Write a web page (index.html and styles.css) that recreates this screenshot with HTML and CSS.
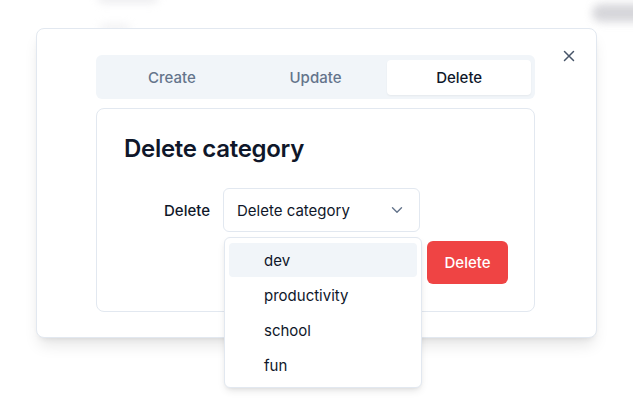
FILE: index.html
```html
<!DOCTYPE html>
<html>
<head>
<meta charset="utf-8">
<link rel="stylesheet" href="styles.css">
</head>
<body>
<div class="backdrop">
  <div class="ghost ghost-text"></div>
  <div class="ghost ghost-small"></div>
  <div class="ghost ghost-pill"></div>
</div>
<div class="modal">
  <button class="close" aria-label="Close">
    <svg width="12" height="12" viewBox="0 0 12 12"><path d="M1.5 1.5L10.5 10.5M10.5 1.5L1.5 10.5" stroke="#475569" stroke-width="1.5" stroke-linecap="round"/></svg>
  </button>
  <div class="tabs">
    <div class="tab">Create</div>
    <div class="tab">Update</div>
    <div class="tab active">Delete</div>
  </div>
  <div class="card">
    <h2 class="title">Delete category</h2>
    <div class="row">
      <label class="label">Delete</label>
      <div class="select-wrap">
        <div class="select">
          <span>Delete category</span>
          <svg width="12" height="8" viewBox="0 0 12 8"><path d="M1.5 1.8L6 6.2L10.5 1.8" fill="none" stroke="#64748b" stroke-width="1.4" stroke-linecap="round" stroke-linejoin="round"/></svg>
        </div>
        <div class="menu">
          <div class="item hl">dev</div>
          <div class="item">productivity</div>
          <div class="item">school</div>
          <div class="item">fun</div>
        </div>
      </div>
    </div>
    <div class="actions">
      <button class="danger">Delete</button>
    </div>
  </div>
</div>
</body>
</html>
```

FILE: styles.css
```css
* { box-sizing: border-box; }
html, body { margin: 0; padding: 0; }
body {
  width: 633px;
  height: 410px;
  overflow: hidden;
  background: #ffffff;
  font-family: Inter, "Noto Sans", sans-serif;
  color: #0f172a;
  position: relative;
  padding: 28px 0 0 36px;
}
.backdrop { position: absolute; inset: 0; z-index: 0; }
.ghost { position: absolute; background: #d9d9de; filter: blur(4px); border-radius: 10px; }
.ghost-text { left: 98px; top: -6px; width: 60px; height: 9px; opacity: 0.5; }
.ghost-small { left: 100px; top: 24px; width: 30px; height: 8px; opacity: 0.35; }
.ghost-pill { left: 592px; top: 4px; width: 60px; height: 18px; opacity: 0.85; background: #cfcfd4; }

.modal {
  position: relative;
  z-index: 1;
  width: 561px;
  height: 310px;
  background: #fff;
  border: 1px solid #e2e8f0;
  border-radius: 8px;
  box-shadow: 0 10px 15px -3px rgba(0,0,0,0.1), 0 4px 6px -4px rgba(0,0,0,0.1);
  padding: 26px 61px 0 59px;
}
.close {
  position: absolute;
  top: 20px;
  right: 20px;
  width: 14px;
  height: 14px;
  padding: 0;
  border: 0;
  background: none;
  display: flex;
  align-items: center;
  justify-content: center;
}
.tabs {
  display: grid;
  grid-template-columns: 1fr 1fr 1fr;
  height: 44px;
  padding: 5px 4px 4px 4px;
  background: #f1f5f9;
  border-radius: 6px;
}
.tab {
  display: flex;
  align-items: center;
  justify-content: center;
  font-size: 15px;
  font-weight: 500;
  color: #64748b;
  border-radius: 4px;
}
.tab.active {
  background: #fff;
  color: #0f172a;
  box-shadow: 0 1px 2px rgba(0,0,0,0.05);
}
.card {
  margin-top: 9px;
  height: 204px;
  border: 1px solid #e2e8f0;
  border-radius: 8px;
  padding: 24px 26px 0 27px;
}
.title {
  margin: 0;
  font-size: 24px;
  line-height: 32px;
  font-weight: 600;
  letter-spacing: -0.3px;
  color: #0f172a;
}
.row {
  display: flex;
  align-items: center;
  gap: 13px;
  margin-top: 23px;
}
.label {
  width: 86px;
  text-align: right;
  font-size: 15px;
  font-weight: 500;
  color: #0f172a;
}
.select-wrap { position: relative; }
.select {
  width: 197px;
  height: 44px;
  border: 1px solid #e2e8f0;
  border-radius: 6px;
  display: flex;
  align-items: center;
  justify-content: space-between;
  padding: 0 16px 0 13px;
  font-size: 15px;
  color: #0f172a;
}
.menu {
  position: absolute;
  left: 1px;
  top: 49px;
  width: 198px;
  background: #fff;
  border: 1px solid #e2e8f0;
  border-radius: 6px;
  padding: 5px 4px 4px 4px;
  box-shadow: 0 4px 8px -2px rgba(0,0,0,0.12), 0 2px 4px -2px rgba(0,0,0,0.08);
  z-index: 5;
}
.item {
  height: 35px;
  display: flex;
  align-items: center;
  padding-left: 35px;
  font-size: 15px;
  color: #0f172a;
  border-radius: 4px;
}
.item.hl { background: #f1f5f9; height: 34px; margin-bottom: 1px; }
.actions {
  display: flex;
  justify-content: flex-end;
  margin-top: 9px;
}
.danger {
  width: 81px;
  height: 43px;
  border: 0;
  border-radius: 6px;
  background: #ef4444;
  color: #fff;
  font-family: inherit;
  font-size: 15px;
  font-weight: 500;
}
```
